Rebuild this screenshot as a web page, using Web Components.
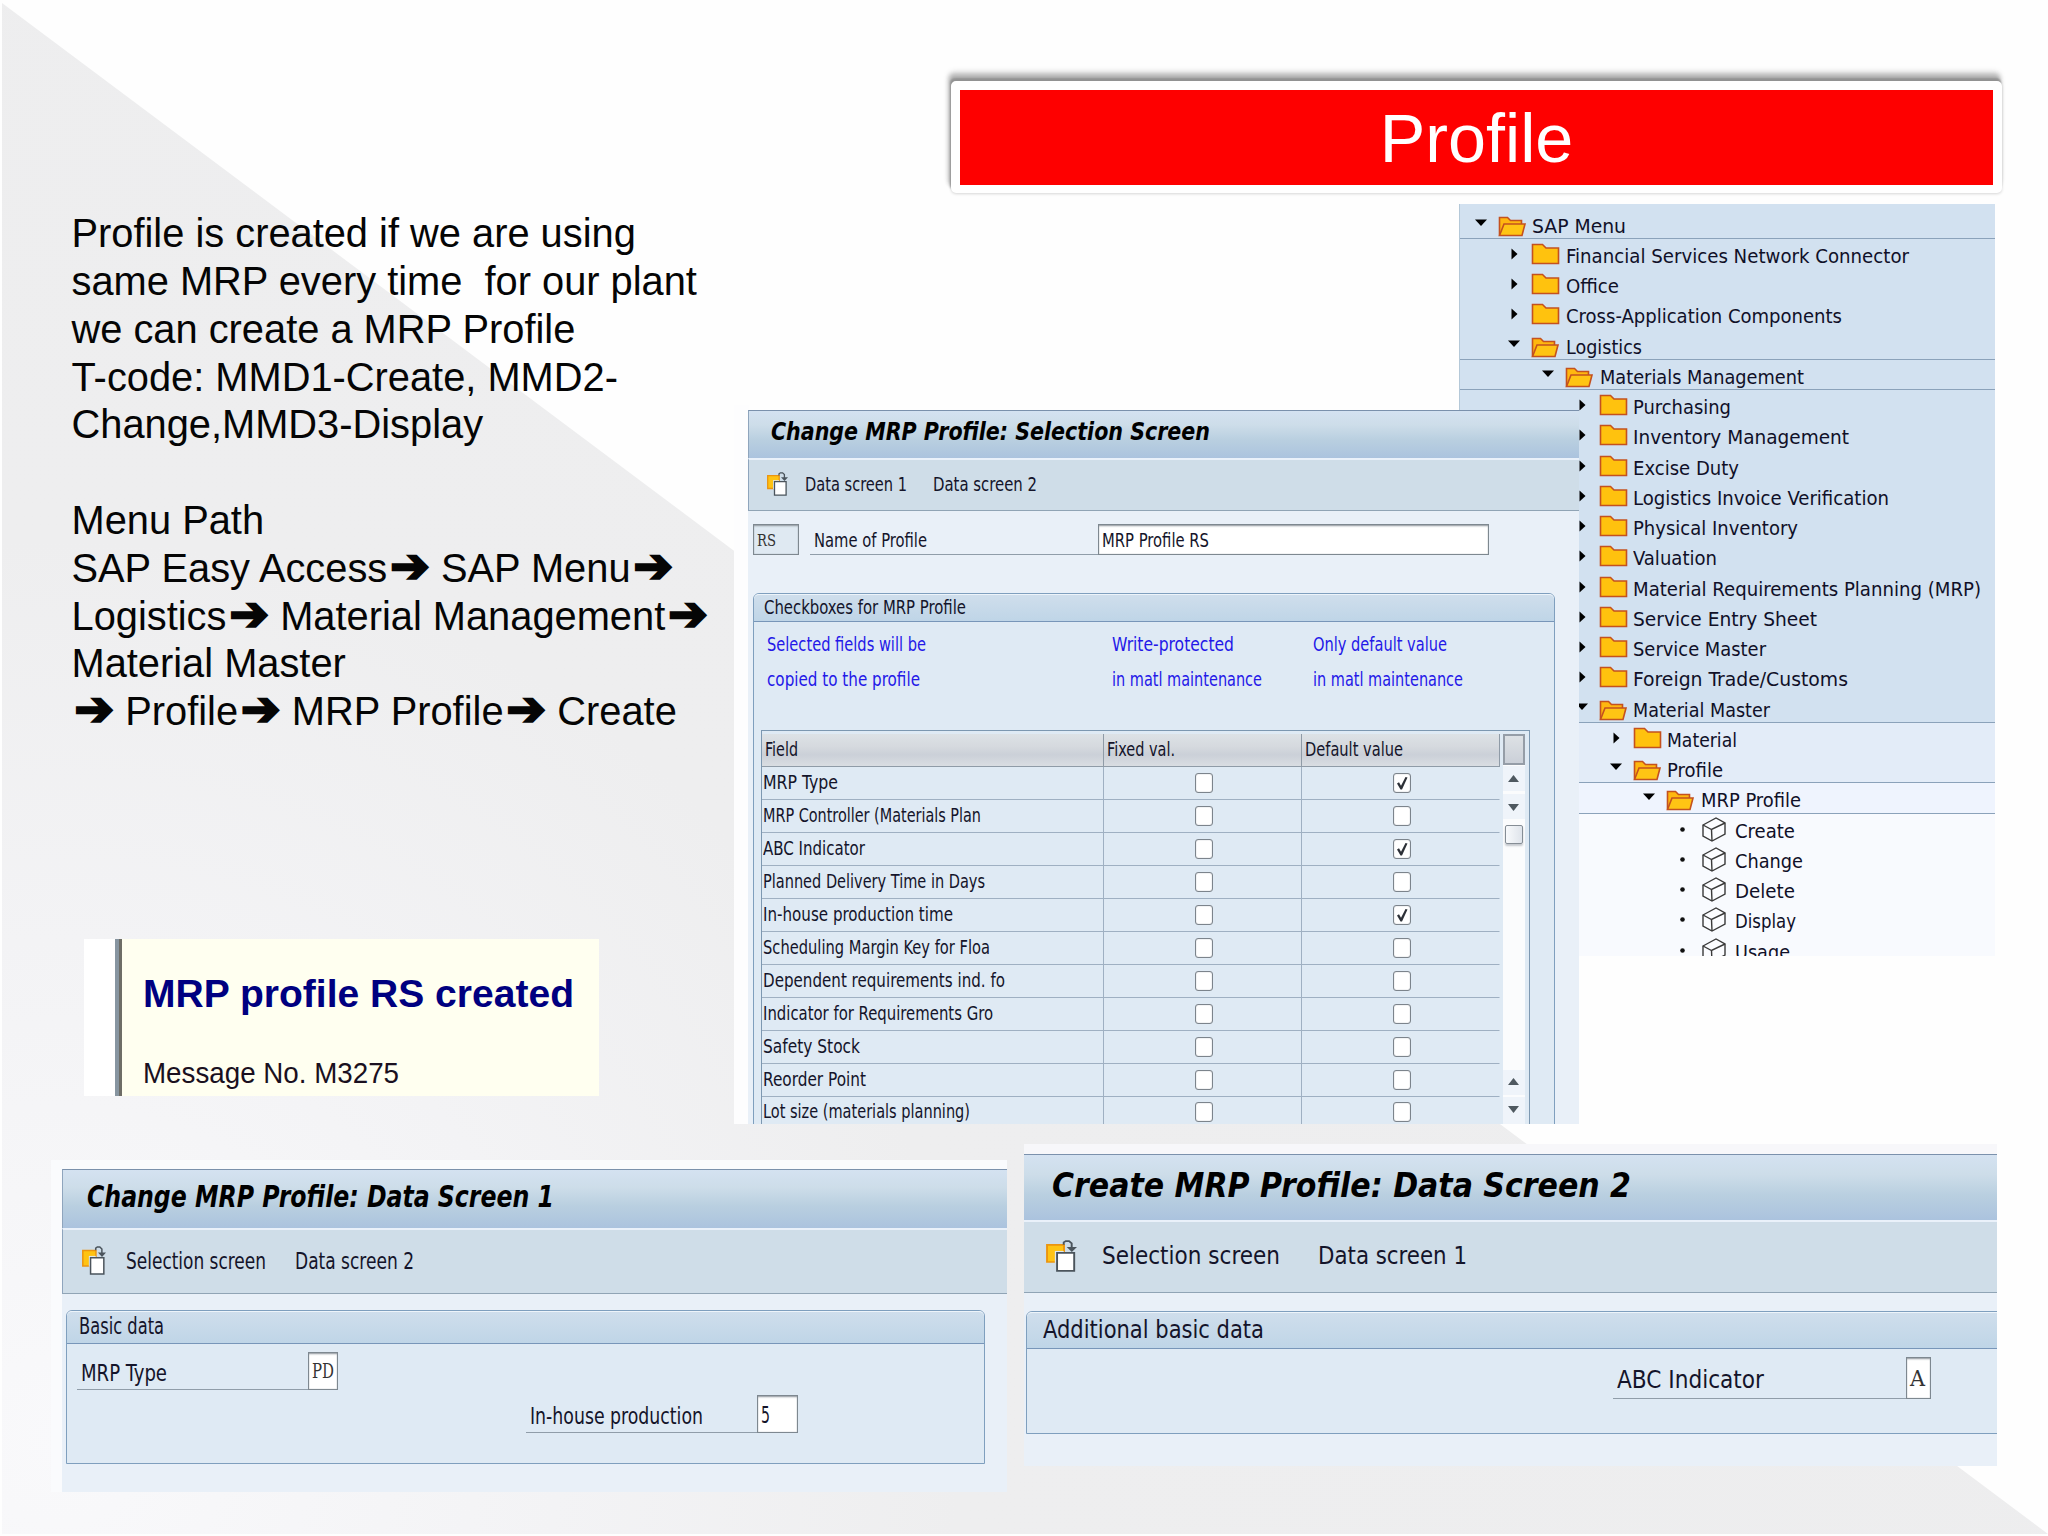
<!DOCTYPE html>
<html lang="en">
<head>
<meta charset="utf-8">
<title>MRP Profile</title>
<style>
    body {
        margin: 0;
        background: #fefefe;
        font-family: "Liberation Sans", Arial, sans-serif;
    }
    /* windows on the slide */
    slide-banner { position: absolute; left: 951px; top: 81px; width: 1051px; height: 112px; }
    slide-text { position: absolute; left: 71.5px; top: 210.3px; }
    sap-tree { position: absolute; left: 1459px; top: 204px; width: 536px; height: 752px; }
    message-note { position: absolute; left: 84px; top: 939px; width: 515px; height: 157px; }
    .paper { position: absolute; background: #fdfdfe; }
    #paperSel { left: 734px; top: 405px; width: 15px; height: 719px; }
    #paperOne { left: 51px; top: 1160px; width: 956px; height: 332px; background: #fafbfd; }
    #paperTwo { left: 1024px; top: 1144px; width: 973px; height: 322px; background: #f7f7fa; }

    #winSel {
        position: absolute; left: 748px; top: 410px; width: 831px; height: 714px;
        --edge: 1px; --title-h: 48px; --bar-h: 51px; --title-fs: 24.7px; --fs: 19.2px; --lift: 1.5px;
        --title-x: 22px; --icon-x: 18px; --icon-w: 21px; --icon-h: 24px; --icon-gap: 17px; --gap: 26px;
    }
    #winOne {
        position: absolute; left: 62px; top: 1169px; width: 945px; height: 323px;
        --edge: 1px; --title-h: 59px; --bar-h: 64px; --title-fs: 30px; --fs: 23.3px; --lift: 3px;
        --title-x: 24px; --icon-x: 19px; --icon-w: 24px; --icon-h: 29px; --icon-gap: 20px; --gap: 29px;
    }
    #winTwo {
        position: absolute; left: 1024px; top: 1154px; width: 973px; height: 312px;
        --edge: 0px; --title-h: 66px; --bar-h: 71px; --title-fs: 34px; --fs: 25px; --lift: 3px;
        --title-x: 28px; --icon-x: 22px; --icon-w: 31px; --icon-h: 32px; --icon-gap: 25px; --gap: 38px;
    }
    .keys { display: flex; padding: 13px 0 0 5px; gap: 11px; }
    .hints {
        display: grid; grid-template-columns: 344.5px 201px 1fr;
        padding: 6px 0 0 13px; height: 107.5px; box-sizing: border-box;
        line-height: 34.7px; grid-auto-rows: 34.7px; color: #2418e8;
    }
</style>
</head>
<body>
<slide-canvas>
    <slide-banner>Profile</slide-banner>

    <slide-text>Profile is created if we are using
same MRP every time  for our plant
we can create a MRP Profile
T-code: MMD1-Create, MMD2-
Change,MMD3-Display

Menu Path
SAP Easy Access<i>➔</i> SAP Menu<i>➔</i>
Logistics<i>➔</i> Material Management<i>➔</i>
Material Master
<i>➔</i> Profile<i>➔</i> MRP Profile<i>➔</i> Create</slide-text>

    <sap-tree></sap-tree>

    <div class="paper" id="paperSel"></div>
    <sap-window id="winSel" heading="Change MRP Profile: Selection Screen" heading-w="439">
        <fit-text slot="action" w="102">Data screen 1</fit-text>
        <fit-text slot="action" w="104">Data screen 2</fit-text>
        <div class="keys">
            <sap-field value="RS" value-w="19" box-w="46" serif locked style="width:46px;height:31px"></sap-field>
            <sap-field label="Name of Profile" label-w="113" value="MRP Profile RS" value-w="107" box-w="391" style="width:678.5px;height:31px"></sap-field>
        </div>
        <sap-group heading="Checkboxes for MRP Profile" heading-w="202" style="margin:37.5px 24px 0 5px;height:560px;--head-h:28.5px;--head-x:10px">
            <div class="hints">
                <fit-text w="159">Selected fields will be</fit-text>
                <fit-text w="122">Write-protected</fit-text>
                <fit-text w="134">Only default value</fit-text>
                <fit-text w="153">copied to the profile</fit-text>
                <fit-text w="150">in matl maintenance</fit-text>
                <fit-text w="150">in matl maintenance</fit-text>
            </div>
            <field-table></field-table>
        </sap-group>
    </sap-window>

    <message-note>
        <fit-text slot="head" w="431">MRP profile RS created</fit-text>
        <fit-text w="256">Message No. M3275</fit-text>
    </message-note>

    <div class="paper" id="paperOne"></div>
    <sap-window id="winOne" heading="Change MRP Profile: Data Screen 1" heading-w="467">
        <fit-text slot="action" w="140">Selection screen</fit-text>
        <fit-text slot="action" w="119">Data screen 2</fit-text>
        <sap-group heading="Basic data" heading-w="85" style="margin:16px 22px 0 4px;height:154px;--head-h:33px;--head-x:12px;--head-lift:4px">
            <sap-field label="MRP Type" label-w="86" value="PD" value-w="22" box-w="30" serif style="width:261px;height:38px;margin:8px 0 0 10px"></sap-field>
            <sap-field label="In-house production" label-w="173" value="5" value-w="9" box-w="41" style="width:272px;height:38px;margin:5px 0 0 459px"></sap-field>
        </sap-group>
    </sap-window>

    <div class="paper" id="paperTwo"></div>
    <sap-window id="winTwo" heading="Create MRP Profile: Data Screen 2" heading-w="579">
        <fit-text slot="action" w="178">Selection screen</fit-text>
        <fit-text slot="action" w="149">Data screen 1</fit-text>
        <sap-group heading="Additional basic data" heading-w="221" style="margin:18px -10px 0 2px;height:123px;--head-h:37px;--head-x:16px;--head-lift:3px">
            <sap-field label="ABC Indicator" label-w="147" value="A" value-w="15" box-w="25" serif style="width:318px;height:42px;margin:8px 0 0 586px"></sap-field>
        </sap-group>
    </sap-window>
</slide-canvas>

<script>
    const SAP_FONT = '"DejaVu Sans Condensed", "DejaVu Sans", Tahoma, sans-serif';

    class SlideCanvas extends HTMLElement {
        constructor() {
            super();
            this.attachShadow({ mode: 'open' }).innerHTML = `
                <style>
                    :host { display: block; position: relative; width: 2048px; height: 1536px; overflow: hidden; background: #fefefe; }
                    .wedge {
                        position: absolute; inset: 0;
                        background: radial-gradient(circle at 60px 1440px, #f9f9fb 0, #f3f3f5 500px, #eeeeef 900px, #ededee 100%);
                        clip-path: polygon(2px 3px, 2048px 1534px, 2px 1534px);
                    }
                </style>
                <div class="wedge"></div>
                <slot></slot>
            `;
        }
    }

    class SlideBanner extends HTMLElement {
        constructor() {
            super();
            this.attachShadow({ mode: 'open' }).innerHTML = `
                <style>
                    :host {
                        display: flex; align-items: center; justify-content: center; box-sizing: border-box;
                        border: 9px solid #fff; border-bottom-width: 8px; border-radius: 5px; padding-top: 2px;
                        background: #fe0000; background-clip: padding-box; color: #fff;
                        font-size: 68.3px; line-height: 1;
                        box-shadow: -1px -3px 2px #929292, -2px -7px 4px #b4b4b4, -2px -9px 6px #dcdcdc, 0 1px 3px rgba(0, 0, 0, .16);
                    }
                </style>
                <slot></slot>
            `;
        }
    }

    class SlideText extends HTMLElement {
        constructor() {
            super();
            this.attachShadow({ mode: 'open' }).innerHTML = `
                <style>
                    :host { display: block; font-size: 39.82px; line-height: 47.8px; color: #050505; }
                    p { margin: 0; white-space: pre; }
                    ::slotted(i) {
                        display: inline-block; box-sizing: border-box; width: 42.7px; padding-left: 3px;
                        font: normal 47px/0 "DejaVu Sans", sans-serif; -webkit-text-stroke: 2.5px #050505;
                    }
                </style>
                <p><slot></slot></p>
            `;
        }
    }

    class MessageNote extends HTMLElement {
        constructor() {
            super();
            this.attachShadow({ mode: 'open' }).innerHTML = `
                <style>
                    :host { display: flex; background: #fff; overflow: hidden; }
                    .rule { width: 4px; margin-left: 31px; background: #8795a0; border-right: 3px solid #6e6d66; }
                    .note { flex: 1; background: #fffff0; padding-left: 21px; color: #1a1020; font-size: 28.7px; line-height: 34px; }
                    .head { height: 117px; padding: 33px 0 0; box-sizing: border-box; font-size: 38.5px; line-height: 44px; font-weight: bold; color: #000080; }
                </style>
                <div class="rule"></div>
                <div class="note">
                    <div class="head"><slot name="head"></slot></div>
                    <slot></slot>
                </div>
            `;
        }
    }

    const TREE = [
        [0, 'open', 'SAP Menu', 94, 1],
        [1, 'shut', 'Financial Services Network Connector', 343],
        [1, 'shut', 'Office', 53],
        [1, 'shut', 'Cross-Application Components', 276],
        [1, 'open', 'Logistics', 76, 1],
        [2, 'open', 'Materials Management', 204, 1],
        [3, 'shut', 'Purchasing', 98],
        [3, 'shut', 'Inventory Management', 216],
        [3, 'shut', 'Excise Duty', 106],
        [3, 'shut', 'Logistics Invoice Verification', 256],
        [3, 'shut', 'Physical Inventory', 165],
        [3, 'shut', 'Valuation', 84],
        [3, 'shut', 'Material Requirements Planning (MRP)', 348],
        [3, 'shut', 'Service Entry Sheet', 184],
        [3, 'shut', 'Service Master', 133],
        [3, 'shut', 'Foreign Trade/Customs', 215],
        [3, 'open', 'Material Master', 137, 1],
        [4, 'shut', 'Material', 70, 0, '#e3ecf8'],
        [4, 'open', 'Profile', 56, 1, '#e3ecf8'],
        [5, 'open', 'MRP Profile', 100, 1, '#eff4fe'],
        [6, 'leaf', 'Create', 60, 0, '#f8fafe'],
        [6, 'leaf', 'Change', 68, 0, '#f8fafe'],
        [6, 'leaf', 'Delete', 60, 0, '#f8fafe'],
        [6, 'leaf', 'Display', 61, 0, '#f8fafe'],
        [6, 'leaf', 'Usage', 55, 0, '#f8fafe']
    ];

    // marker and icon share one 54px wide drawing per node
    const NODE_ART = {
        open: `<path d="M1 10.5h12l-6 6.5z" fill="#000"/>
            <path d="M25.5 26.5v-18h8l3 3h11v4" fill="#ffb70f" stroke="#c4511f" stroke-width="1.6"/>
            <path d="M25.5 26.5l4.500-11.5h21l-3 11.5z" fill="#ffc414" stroke="#c4511f" stroke-width="1.6"/>`,
        shut: `<path d="M4.500 9.5l6 5.5-6 5.5z" fill="#000"/>
            <path d="M25.5 24.5v-19h10l3.5 3.5h12.5v15.5z" fill="#ffc20e" stroke="#c4511f" stroke-width="1.6"/>`,
        leaf: `<circle cx="6.5" cy="15.5" r="2.3" fill="#111"/>
            <path d="M27 11l13-7 9 5v11l-13 7-9-5z" fill="#fbfcff" stroke="#3a3a3a" stroke-width="1.4"/>
            <path d="M27 11l8.5 4.5L49 9M35.5 15.5L36 27" fill="none" stroke="#3a3a3a" stroke-width="1.4"/>`
    };

    class TreeNode extends HTMLElement {
        connectedCallback() {
            const level = Number(this.getAttribute('level'));
            const kind = this.getAttribute('kind');
            this.attachShadow({ mode: 'open' }).innerHTML = `
                <style>
                    :host { display: flex; box-sizing: border-box; height: 30.26px; padding-left: ${13.5 + level * 33.75}px; background: ${this.getAttribute('tint') || 'none'}; }
                    :host([line]) { border-bottom: 1px solid #8ba2ba; }
                    svg { width: 54px; height: 30px; margin-right: 4.5px; flex: none; }
                    fit-text { line-height: 30.26px; margin-top: 3px; }
                </style>
                <svg viewBox="0 0 54 30">${NODE_ART[kind]}</svg>
                <fit-text w="${this.getAttribute('w')}">${this.getAttribute('label')}</fit-text>
            `;
        }
    }

    class SapTree extends HTMLElement {
        connectedCallback() {
            this.attachShadow({ mode: 'open' }).innerHTML = `
                <style>
                    :host {
                        display: block; box-sizing: border-box; overflow: hidden; padding-top: 4.7px;
                        background: #d2e1f0; border-left: 1px solid #b4c8d8;
                        font-family: ${SAP_FONT}; font-size: 19.2px; color: #101028;
                    }
                </style>
                ${TREE.map(([level, kind, label, w, line, tint]) =>
                    `<tree-node level="${level}" kind="${kind}" label="${label}" w="${w}" ${line ? 'line' : ''} tint="${tint || ''}"></tree-node>`
                ).join('')}
            `;
        }
    }

    class SapWindow extends HTMLElement {
        connectedCallback() {
            this.attachShadow({ mode: 'open' }).innerHTML = `
                <style>
                    :host { display: block; overflow: hidden; background: #e9f0f8; font-family: ${SAP_FONT}; font-size: var(--fs); color: #14142a; }
                    div { display: flex; align-items: center; box-sizing: border-box; border-left: var(--edge) solid #8fa5bd; }
                    .title {
                        height: var(--title-h); padding: 0 0 6px var(--title-x);
                        border-top: 1px solid #7b91ac;
                        background: linear-gradient(#d4e2f1, #cddde9 30%, #b9cfe0 62%, #abc3de);
                        font-size: var(--title-fs); font-weight: bold; font-style: oblique; color: #000;
                    }
                    .bar {
                        height: calc(var(--bar-h) + 2px); padding: 0 0 var(--lift) var(--icon-x); gap: var(--gap);
                        border-top: 2px solid #eaf1fa; border-bottom: 1px solid #90a4b5; background: #cfdde8;
                    }
                    svg { width: var(--icon-w); height: var(--icon-h); margin-right: calc(var(--icon-gap) - var(--gap)); }
                </style>
                <div class="title"><fit-text w="${this.getAttribute('heading-w')}">${this.getAttribute('heading')}</fit-text></div>
                <div class="bar">
                    <svg viewBox="0 0 21 24" preserveAspectRatio="none">
                        <path d="M.7 3.7h11.5v12.8H.7z" fill="#ffc313" stroke="#eb9510" stroke-width="1.3"/>
                        <path d="M6 8.2h6v9H6z" fill="#dfe8ee"/>
                        <path d="M7.5 9.7h11.6v13.4H7.5z" fill="#fff" stroke="#4b545c" stroke-width="1.3"/>
                        <path d="M12 3.5V1.8l1.4-1h2.2l1.8 1.7V6" fill="none" stroke="#4b545c" stroke-width="1.3"/>
                        <path d="M14 5.3h7L17.5 9z" fill="#4b545c"/>
                    </svg>
                    <slot name="action"></slot>
                </div>
                <slot></slot>
            `;
        }
    }

    class SapGroup extends HTMLElement {
        connectedCallback() {
            this.attachShadow({ mode: 'open' }).innerHTML = `
                <style>
                    :host { display: block; box-sizing: border-box; border: 1px solid #7f9fbe; border-radius: 6px 6px 0 0; background: #dfeaf4; }
                    .head {
                        display: flex; align-items: center; box-sizing: border-box;
                        height: var(--head-h); padding: 0 0 var(--head-lift, 1px) var(--head-x);
                        border-top: 1px solid #edf4fa; border-bottom: 1px solid #7896b9; border-radius: 5px 5px 0 0;
                        background: linear-gradient(#cfdeec, #bfd5e7);
                    }
                </style>
                <div class="head"><fit-text w="${this.getAttribute('heading-w')}">${this.getAttribute('heading')}</fit-text></div>
                <slot></slot>
            `;
        }
    }

    class SapField extends HTMLElement {
        connectedCallback() {
            const label = this.getAttribute('label');
            this.attachShadow({ mode: 'open' }).innerHTML = `
                <style>
                    :host { display: flex; box-sizing: border-box; }
                    div { display: flex; align-items: center; box-sizing: border-box; padding: 3px 0 0 4px; }
                    .label { flex: 1; border-bottom: 1px solid #909da9; }
                    .box {
                        width: ${this.getAttribute('box-w')}px; flex: none; padding: 1px 0 0 3px; background: #fff;
                        border: 1px solid #7e8890; box-shadow: inset 0 2px 2px -1px #8f969d, inset 0 0 1px #7e8890;
                    }
                    :host([serif]) .box { padding-top: 0; font-family: "DejaVu Serif", serif; font-size: .88em; color: #333; }
                    :host([locked]) .box { background: #dfe9f2; }
                </style>
                ${label ? `<div class="label"><fit-text w="${this.getAttribute('label-w')}">${label}</fit-text></div>` : ''}
                <div class="box"><fit-text w="${this.getAttribute('value-w')}">${this.getAttribute('value')}</fit-text></div>
            `;
        }
    }

    const FIELDS = [
        ['MRP Type', 75, true],
        ['MRP Controller (Materials Plan', 218],
        ['ABC Indicator', 102, true],
        ['Planned Delivery Time in Days', 222],
        ['In-house production time', 190, true],
        ['Scheduling Margin Key for Floa', 227],
        ['Dependent requirements ind. fo', 242],
        ['Indicator for Requirements Gro', 230],
        ['Safety Stock', 97],
        ['Reorder Point', 103],
        ['Lot size (materials planning)', 207]
    ];

    class CheckMark extends HTMLElement {
        connectedCallback() {
            this.attachShadow({ mode: 'open' }).innerHTML = `
                <style>
                    :host { display: flex; box-sizing: border-box; width: 18px; height: 20px; border: 1px solid #7c848c; border-radius: 3px; background: #fff; box-shadow: inset 0 0 1px #7c848c; }
                    svg { width: 100%; height: 100%; }
                </style>
                ${this.hasAttribute('on') ? '<svg viewBox="0 0 16 18"><path d="M3 9.5l2-1.2 2 3.4L11.5 3l2 .4L8 15.5H6.5z" fill="#2c3037"/></svg>' : ''}
            `;
        }
    }

    class FieldTable extends HTMLElement {
        connectedCallback() {
            this.attachShadow({ mode: 'open' }).innerHTML = `
                <style>
                    :host {
                        display: flex; box-sizing: border-box; width: 769px; height: 395px; margin-left: 6.5px; padding: 3px 0 0;
                        border: 1px solid #7d98b1; border-bottom: none; background: #dfeaf4;
                    }
                    .row { display: grid; grid-template-columns: 342.5px 198px 198px; height: 33px; box-sizing: border-box; }
                    .row > * { display: flex; align-items: center; box-sizing: border-box; border-right: 1px solid #9fb0c2; border-bottom: 1px solid #9fb0c2; }
                    .row > :first-child { padding-left: 1px; }
                    .row > :last-child { border-right-color: transparent; }
                    .cell { justify-content: center; padding-left: 2px; }
                    .row:last-child > * { height: 30px; border-bottom: none; }
                    .head > * { padding-left: 3px !important; background: linear-gradient(#dde2e6, #d5d9de 40%, #cbd0d8 65%, #d9dde2); border-color: #8f9ba7 !important; }
                    .scroll { display: flex; flex-direction: column; align-items: center; width: 22px; margin-left: 3px; background: #fbfcfd; }
                    .all { width: 22px; height: 31px; box-sizing: border-box; border: 2px solid #959da7; background: linear-gradient(#dde1e5, #cbd0d8); flex: none; }
                    .step { width: 22px; height: 25px; margin-top: 1px; background: #eff4fa; flex: none; }
                    .thumb { width: 18px; height: 19px; margin-top: 6px; box-sizing: border-box; border: 1px solid #858d95; border-radius: 2px; background: linear-gradient(90deg, #f8fafc, #dfe4eb); box-shadow: 0 2px 2px #c5c9ce; flex: none; }
                    .track { flex: 1; }
                    svg { display: block; width: 22px; height: 25px; }
                </style>
                <div>
                    <div class="row head">
                        <span><fit-text w="33">Field</fit-text></span>
                        <span><fit-text w="68">Fixed val.</fit-text></span>
                        <span><fit-text w="98">Default value</fit-text></span>
                    </div>
                    ${FIELDS.map(([name, w, on]) => `
                        <div class="row">
                            <span><fit-text w="${w}">${name}</fit-text></span>
                            <span class="cell"><check-mark></check-mark></span>
                            <span class="cell"><check-mark ${on ? 'on' : ''}></check-mark></span>
                        </div>
                    `).join('')}
                </div>
                <div class="scroll">
                    <div class="all"></div>
                    <div class="step">${this.arrow('M5 16h11l-5.5-7z')}</div>
                    <div class="step" style="margin-top:3px">${this.arrow('M5 10h11l-5.5 7z')}</div>
                    <div class="thumb"></div>
                    <div class="track"></div>
                    <div class="step">${this.arrow('M5 15h11l-5.5-7z')}</div>
                    <div class="step" style="height:28px;margin-top:2px">${this.arrow('M5 9h11l-5.5 7z')}</div>
                </div>
            `;
        }

        arrow(d) {
            return `<svg viewBox="0 0 22 25"><path d="${d}" fill="#4f5960"/></svg>`;
        }
    }

    // squeezes or stretches a line of text to the width given in w
    class FitText extends HTMLElement {
        connectedCallback() {
            if (this.shadowRoot) return;
            const w = Number(this.getAttribute('w'));
            this.attachShadow({ mode: 'open' }).innerHTML = `
                <style>
                    :host { display: block; width: ${w}px; flex: none; white-space: nowrap; }
                    span { display: inline-block; transform-origin: 0 50%; }
                </style>
                <span><slot></slot></span>
            `;
            const span = this.shadowRoot.querySelector('span');
            const natural = span.getBoundingClientRect().width;
            if (natural) span.style.transform = `scaleX(${w / natural})`;
        }
    }

    customElements.define('slide-canvas', SlideCanvas);
    customElements.define('slide-banner', SlideBanner);
    customElements.define('slide-text', SlideText);
    customElements.define('message-note', MessageNote);
    customElements.define('sap-tree', SapTree);
    customElements.define('tree-node', TreeNode);
    customElements.define('sap-window', SapWindow);
    customElements.define('sap-group', SapGroup);
    customElements.define('sap-field', SapField);
    customElements.define('field-table', FieldTable);
    customElements.define('check-mark', CheckMark);
    // last, so that every parent has its fonts in place before measuring
    customElements.define('fit-text', FitText);
</script>
</body>
</html>
